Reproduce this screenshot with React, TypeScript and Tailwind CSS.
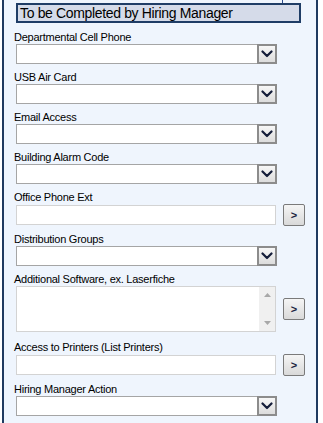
import React from "react";

const font = { fontFamily: '"Liberation Sans", Arial, sans-serif' };

function Chevron() {
  return (
    <svg width="12" height="8" viewBox="0 0 12 8">
      <polyline points="1.5,1.5 6,6 10.5,1.5" fill="none" stroke="#141d3a" strokeWidth="2.2" strokeLinecap="round" strokeLinejoin="round" />
    </svg>
  );
}

function Select() {
  return (
    <div className="flex h-[20px] w-[261px] border border-[#a5a5a5] bg-white">
      <div className="flex-1" />
      <div className="-my-px -mr-px flex h-[20px] w-[20px] items-center justify-center border-2 border-[#8c8c8c] bg-gradient-to-b from-[#f7f7f7] to-[#dcdcdc]">
        <Chevron />
      </div>
    </div>
  );
}

function GoButton() {
  return (
    <div className="flex h-[22px] w-[22px] items-center justify-center rounded-[2px] border border-[#7a7a7a] bg-gradient-to-b from-[#f5f5f5] to-[#d9d9d9] text-[11px] font-bold text-[#1a2440]">
      &gt;
    </div>
  );
}

function Label({ children, pt = "pt-[6px]" }: { children: React.ReactNode; pt?: string }) {
  return <div className={`${pt} pl-[10px] text-[11px] leading-[14px] tracking-[-0.25px] text-black`}>{children}</div>;
}

export default function App() {
  return (
    <div className="relative h-[423px] w-[323px] overflow-hidden bg-white" style={font}>
      <div className="absolute left-[282px] top-0 h-[3px] w-px bg-[#2b4a8a]" />
      <div className="ml-[2px] h-[423px] w-[316px] border-x-2 border-[#1f3a60] bg-[#eff5fd] pt-[3px]">
        <div className="ml-[12px] flex h-[20px] w-[285px] items-center border-2 border-[#1f3d66] bg-[#d5dbe9] pl-[2px] text-[14px] leading-none tracking-[-0.35px] text-black">
          To be Completed by Hiring Manager
        </div>
        <div className="pt-px">
          <Label>Departmental Cell Phone</Label>
          <div className="pl-[12px]"><Select /></div>
          <Label>USB Air Card</Label>
          <div className="pl-[12px]"><Select /></div>
          <Label>Email Access</Label>
          <div className="pl-[12px]"><Select /></div>
          <Label>Building Alarm Code</Label>
          <div className="pl-[12px]"><Select /></div>
          <Label>Office Phone Ext</Label>
          <div className="flex items-center gap-[7px] pl-[12px]">
            <div className="h-[20px] w-[260px] border border-[#d3d3d3] bg-white" />
            <GoButton />
          </div>
          <Label>Distribution Groups</Label>
          <div className="pl-[12px]"><Select /></div>
          <Label>Additional Software, ex. Laserfiche</Label>
          <div className="flex items-center gap-[7px] pl-[12px]">
            <div className="flex h-[46px] w-[260px] border border-[#d3d3d3] bg-white">
              <div className="flex-1" />
              <div className="flex w-[16px] flex-col items-center justify-between bg-[#f0f0f0] py-[6px]">
                <svg width="7" height="4" viewBox="0 0 7 4"><polygon points="0,4 7,4 3.5,0" fill="#a8a8a8" /></svg>
                <svg width="7" height="4" viewBox="0 0 7 4"><polygon points="0,0 7,0 3.5,4" fill="#a8a8a8" /></svg>
              </div>
            </div>
            <GoButton />
          </div>
          <Label pt="pt-[8px]">Access to Printers (List Printers)</Label>
          <div className="flex items-center gap-[7px] pl-[12px]">
            <div className="h-[20px] w-[260px] border border-[#d3d3d3] bg-white" />
            <GoButton />
          </div>
          <Label>Hiring Manager Action</Label>
          <div className="pl-[12px]"><Select /></div>
        </div>
      </div>
    </div>
  );
}
